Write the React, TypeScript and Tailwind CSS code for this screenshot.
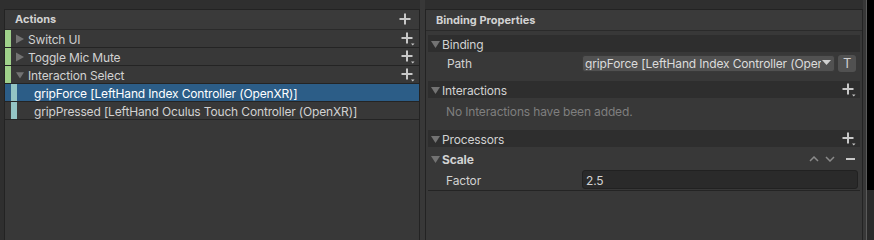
import React from "react";

const PlusIcon = ({ dropdown = false }: { dropdown?: boolean }) => (
  <svg width="14" height="14" viewBox="0 0 14 14" className="block">
    <rect x="0.5" y="5" width="11" height="2" fill="#c8c8c8" />
    <rect x="5" y="0.5" width="2" height="11" fill="#c8c8c8" />
    {dropdown && <path d="M10 11.5 L13.5 11.5 L11.75 13.5 Z" fill="#c8c8c8" />}
  </svg>
);

const TriRight = () => (
  <svg width="8" height="10" viewBox="0 0 8 10" className="block">
    <path d="M0 0.5 L8 5 L0 9.5 Z" fill="#737373" />
  </svg>
);

const TriDown = () => (
  <svg width="9" height="8" viewBox="0 0 9 8" className="block">
    <path d="M0 1 L9 1 L4.5 8 Z" fill="#737373" />
  </svg>
);

const ActionRow = ({ label, open }: { label: string; open?: boolean }) => (
  <div className="flex h-[18px] items-center border-b border-[#242424]">
    <div className="w-[6px] h-full bg-[#9fd08a]" />
    <div className="w-[5px]" />
    <div className="w-[8px] flex justify-start">{open ? <TriDown /> : <TriRight />}</div>
    <div className="flex-1 text-[#d2d2d2] pl-[4px] pt-[2px]">{label}</div>
    <div className="w-[20px] flex justify-center mr-[1px]"><PlusIcon dropdown /></div>
  </div>
);

const BindingRow = ({ label, selected }: { label: string; selected?: boolean }) => (
  <div className={`flex h-[18px] items-center border-b border-[#242424] ${selected ? "bg-[#2c5d87]" : ""}`}>
    <div className="w-[6px] h-full" />
    <div className="w-[6px] h-full bg-[#93c4c4]" />
    <div className={`pl-[17px] pt-[2px] ${selected ? "text-white" : "text-[#d2d2d2]"}`}>{label}</div>
  </div>
);

const FoldHeader = ({ label, right }: { label: string; right?: React.ReactNode }) => (
  <div className="flex h-[17px] items-center bg-[#2e2e2e] pl-[3px] pr-[4px]">
    <TriDown />
    <div className="pl-[2px] pt-[2px] text-[#d2d2d2] flex-1">{label}</div>
    {right}
  </div>
);

export default function App() {
  return (
    <div
      className="w-[874px] h-[240px] bg-[#2f2f2f] flex overflow-hidden text-[12px] leading-none tracking-[-0.15px]"
      style={{ fontFamily: "Inter, 'Noto Sans', sans-serif" }}
    >
      {/* left panel */}
      <div className="ml-[4px] mt-[9px] w-[416px] border-l border-t border-r border-[#232323] bg-[#383838] flex flex-col">
        <div className="h-[20px] flex items-center pl-[10px] pr-[6px] border-b border-[#2a2a2a] bg-[#3a3a3a]">
          <div className="flex-1 font-bold text-[11px] text-[#d2d2d2] tracking-normal">Actions</div>
          <PlusIcon />
        </div>
        <ActionRow label="Switch UI" />
        <ActionRow label="Toggle Mic Mute" />
        <ActionRow label="Interaction Select" open />
        <BindingRow label="gripForce [LeftHand Index Controller (OpenXR)]" selected />
        <BindingRow label="gripPressed [LeftHand Oculus Touch Controller (OpenXR)]" />
      </div>

      {/* gap */}
      <div className="w-[5px] bg-[#383838]" />

      {/* right panel */}
      <div className="mt-[9px] w-[438px] border-l border-t border-r border-[#232323] bg-[#383838] flex flex-col">
        <div className="h-[21px] flex items-center pl-[10px] border-b border-[#2a2a2a] bg-[#3a3a3a]">
          <div className="font-bold text-[11px] text-[#d2d2d2] tracking-normal">Binding Properties</div>
        </div>
        <div className="pl-[2px] pr-[2px] pt-[4px] flex flex-col">
          <FoldHeader label="Binding" />
          <div className="h-[20px] flex items-center mt-[1px]">
            <div className="w-[154px] pl-[19px] pt-[2px] text-[#d2d2d2]">Path</div>
            <div className="w-[253px] h-[17px] bg-[#515151] rounded-[3px] border border-[#3a3a3a] flex items-center pl-[2px] pr-[3px] text-[#dcdcdc] overflow-hidden">
              <div className="flex-1 overflow-hidden whitespace-nowrap pt-[1px]">gripForce [LeftHand Index Controller (OpenXR)]</div>
              <svg width="9" height="6" viewBox="0 0 9 6" className="ml-[1px] shrink-0"><path d="M0 0 L9 0 L4.5 5 Z" fill="#d0d0d0" /></svg>
            </div>
            <div className="ml-[3px] w-[18px] h-[17px] bg-[#515151] rounded-[3px] flex items-center justify-center text-[#d0d0d0] text-[13px] pt-[1px]">T</div>
          </div>
          <div className="h-[8px]" />
          <FoldHeader label="Interactions" right={<PlusIcon dropdown />} />
          <div className="h-[26px] flex items-center pl-[18px] pt-[2px] text-[#7f7f7f]">No Interactions have been added.</div>
          <div className="h-[6px]" />
          <FoldHeader label="Processors" right={<PlusIcon dropdown />} />
          <div className="h-[22px] flex items-center pl-[3px] pr-[5px] mt-[1px]">
            <TriDown />
            <div className="pl-[2px] pt-[2px] font-bold text-[#d2d2d2] flex-1">Scale</div>
            <svg width="10" height="6" viewBox="0 0 10 6" className="mr-[6px]"><path d="M1 5 L5 1 L9 5" stroke="#8a8a8a" strokeWidth="1.5" fill="none" /></svg>
            <svg width="10" height="6" viewBox="0 0 10 6" className="mr-[11px]"><path d="M1 1 L5 5 L9 1" stroke="#8a8a8a" strokeWidth="1.5" fill="none" /></svg>
            <div className="w-[9px] h-[2px] bg-[#c8c8c8]" />
          </div>
          <div className="h-[21px] flex items-start border-b border-[#242424]">
            <div className="w-[154px] h-[19px] flex items-center pl-[18px] pt-[2px] text-[#d2d2d2]">Factor</div>
            <div className="w-[276px] h-[19px] bg-[#2a2a2a] rounded-[3px] border border-[#212121] flex items-center pl-[3px] pt-[2px] text-[#d2d2d2]">2.5</div>
          </div>
        </div>
      </div>

      {/* right black strip */}
      <div className="flex-1 flex">
        <div className="w-[3px] bg-[#383838]" />
        <div className="w-[1px] bg-[#5a5a5a]" />
        <div className="flex-1 flex flex-col">
          <div className="h-[190px] bg-black" />
          <div className="flex-1 bg-[#2a2a2a]" />
        </div>
      </div>
    </div>
  );
}
